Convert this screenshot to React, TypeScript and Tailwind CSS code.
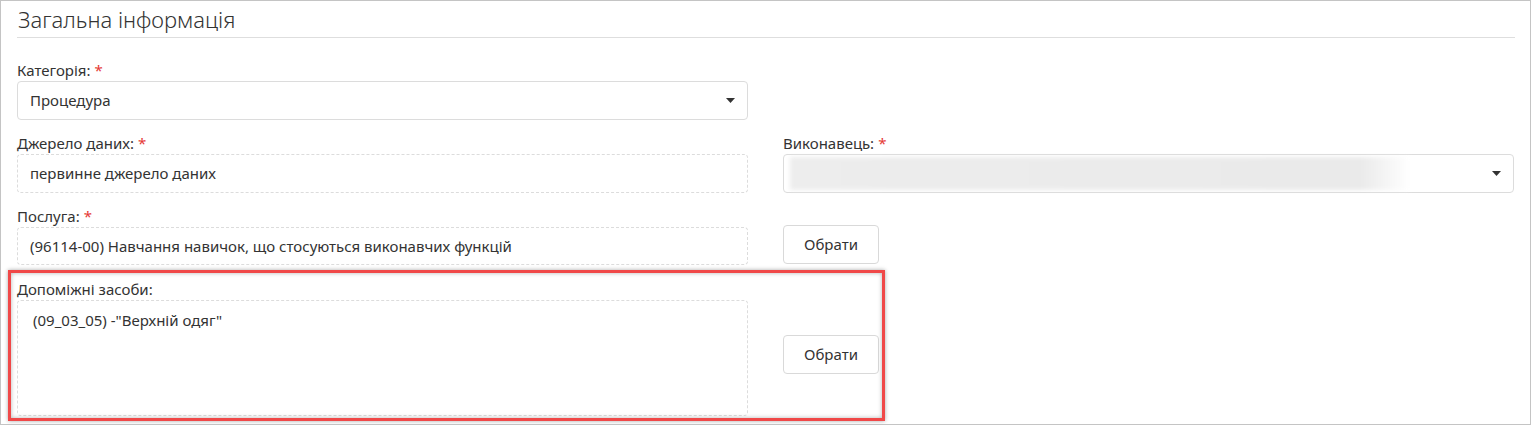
import React from "react";

const font = { fontFamily: '"Noto Sans", "Open Sans", sans-serif' };

function Caret() {
  return (
    <svg width="9" height="5" viewBox="0 0 9 5" className="shrink-0">
      <path d="M0 0 L9 0 L4.5 5 Z" fill="#333" />
    </svg>
  );
}

function Label({ text, required }: { text: string; required?: boolean }) {
  return (
    <div className="h-5 leading-5 text-[15px] text-[#333] mb-[1px]">
      {text}
      {required && <span className="text-[#e53935] ml-[4px]">*</span>}
    </div>
  );
}

function Button() {
  return (
    <button className="w-[96px] h-[39px] bg-white border border-[#d9d9d9] rounded-[4px] text-[15px] text-[#333]">
      Обрати
    </button>
  );
}

export default function App() {
  return (
    <div
      className="w-[1531px] h-[425px] bg-white border border-[#c4c4c4] overflow-hidden"
      style={font}
    >
      <div className="pl-[16px] pr-[15px]">
        <div className="h-[37px] border-b border-[#dedede] text-[22px] font-light text-[#333] leading-[36px] pl-[1px]">
          Загальна інформація
        </div>
        <div className="mt-[22px] grid grid-cols-[731px_731px] gap-x-[35px]">
          {/* Row 1 */}
          <div>
            <Label text="Категорія:" required />
            <div className="h-[39px] border border-[#dcdcdc] rounded-[4px] flex items-center justify-between pl-[12px] pr-[12px] text-[15px] text-[#333]">
              <span>Процедура</span>
              <Caret />
            </div>
          </div>
          <div />

          {/* Row 2 */}
          <div className="mt-[13px]">
            <Label text="Джерело даних:" required />
            <div className="h-[39px] border border-dashed border-[#dcdcdc] rounded-[4px] flex items-center pl-[12px] text-[15px] text-[#333]">
              первинне джерело даних
            </div>
          </div>
          <div className="mt-[13px]">
            <Label text="Виконавець:" required />
            <div className="h-[39px] border border-[#dcdcdc] rounded-[4px] flex items-center justify-between pl-[6px] pr-[12px]">
              <div className="w-[620px] h-[33px] blur-[2px] bg-[linear-gradient(to_right,#ededed,#eaeaea_92%,#ffffff)]" />
              <Caret />
            </div>
          </div>

          {/* Row 3 */}
          <div className="mt-[13px]">
            <Label text="Послуга:" required />
            <div className="h-[38px] border border-dashed border-[#dcdcdc] rounded-[4px] flex items-center pl-[12px] text-[15px] text-[#333]">
              (96114-00) Навчання навичок, що стосуються виконавчих функцій
            </div>
          </div>
          <div className="mt-[13px] flex items-end pb-[1px]">
            <Button />
          </div>

          {/* Row 4 with annotation */}
          <div className="col-span-2 relative mt-[14px]">
            <div className="grid grid-cols-[731px_731px] gap-x-[35px]">
              <div>
                <Label text="Допоміжні засоби:" />
                <div className="h-[116px] border border-dashed border-[#dcdcdc] rounded-[4px] pl-[15px] pt-[8px] text-[15px] text-[#333]">
                  (09_03_05) -"Верхній одяг"
                </div>
              </div>
              <div className="flex items-center pt-[14px]">
                <Button />
              </div>
            </div>
            <div className="absolute left-[-9px] top-[-9px] w-[877px] h-[151px] border-[3px] border-[#f04848] shadow-[0_0_4px_rgba(0,0,0,0.35),inset_0_0_4px_rgba(0,0,0,0.3)] pointer-events-none" />
          </div>
        </div>
      </div>
    </div>
  );
}
